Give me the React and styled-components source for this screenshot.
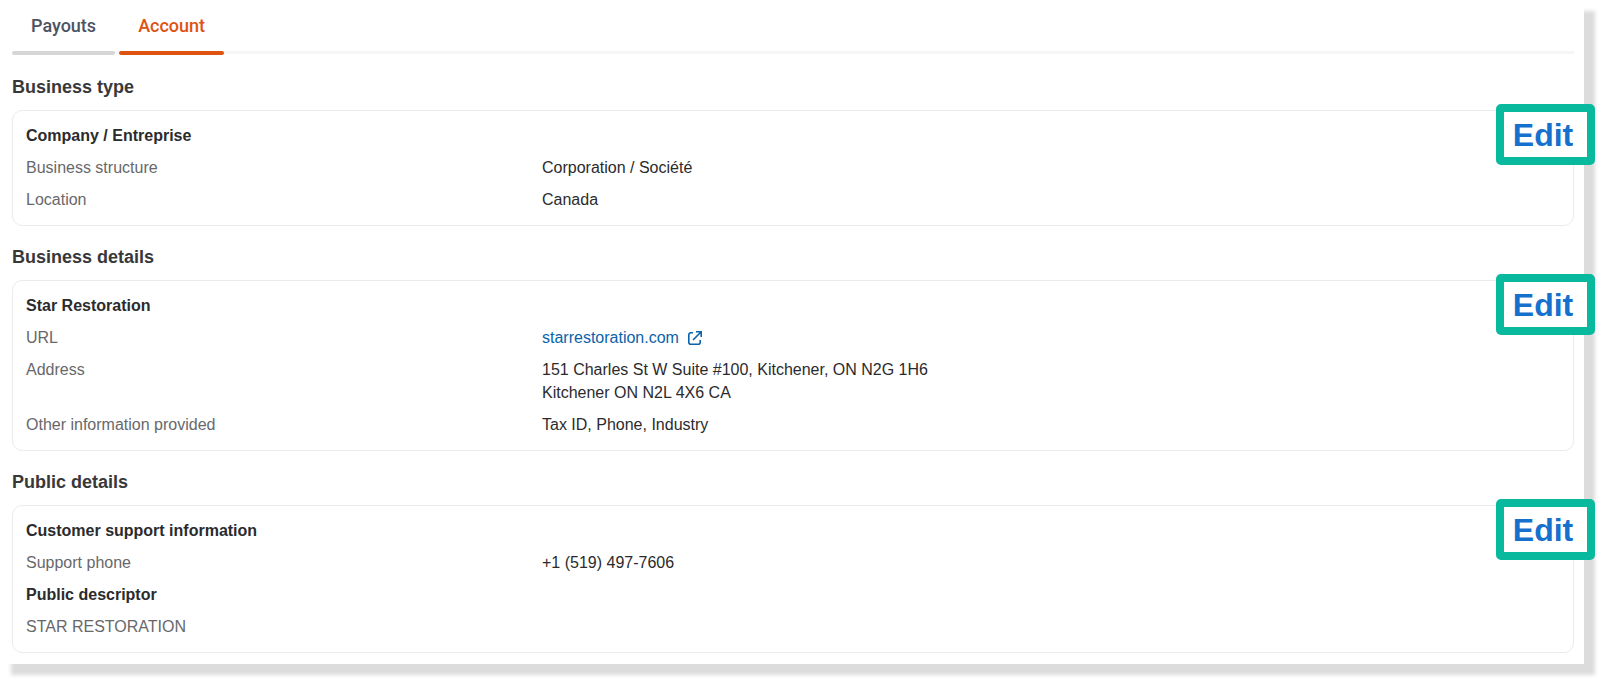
import React from "react";
import styled, { createGlobalStyle } from "styled-components";

const GlobalStyle = createGlobalStyle`
  * { box-sizing: border-box; }
  body {
    margin: 0;
    background: #ffffff;
    color: #2b2b2d;
    font-family: "Liberation Sans", Arial, sans-serif;
    font-size: 16px;
    line-height: 23px;
  }
`;

const Panel = styled.main`
  margin: 0 16px 16px 0;
  padding: 0 10px 11px 12px;
  background: #ffffff;
  box-shadow: 11px 11px 4px #dcdcdc;
`;

const TabList = styled.div`
  position: relative;
  display: flex;
  gap: 4px;
  height: 55px;

  &::before {
    content: "";
    position: absolute;
    left: 0;
    right: 0;
    bottom: 1px;
    height: 3px;
    background: #f6f6f6;
  }
`;

const Tab = styled.button`
  position: relative;
  padding: 0 19px 4px;
  border: 0;
  background: none;
  font: 500 18px/24px Roboto, sans-serif;
  color: ${({ $active }) => ($active ? "#de5212" : "#4c5362")};
  cursor: pointer;

  &::after {
    content: "";
    position: absolute;
    left: 0;
    right: 0;
    bottom: 0;
    height: 4px;
    border-radius: 2px;
    background: ${({ $active }) => ($active ? "#de5212" : "#d6d6d6")};
  }
`;

const Sections = styled.div`
  display: flex;
  flex-direction: column;
  gap: 19px;
  padding-top: 20px;
`;

const SectionTitle = styled.h2`
  margin: 0 0 11px;
  font-size: 18px;
  line-height: 24px;
  font-weight: 700;
  color: #38383a;
`;

const Card = styled.div`
  position: relative;
  display: flex;
  flex-direction: column;
  gap: 9px;
  padding: 13px 13px 14px;
  border: 1px solid #ebebeb;
  border-radius: 10px;
`;

const CardTitle = styled.h3`
  margin: 0;
  font-size: 16px;
  line-height: 23px;
  font-weight: 700;
`;

const Details = styled.dl`
  display: flex;
  flex-direction: column;
  gap: 9px;
  margin: 0;
`;

const Row = styled.div`
  display: grid;
  grid-template-columns: 1fr 2fr;
  gap: 7px;
`;

const Label = styled.dt`
  color: #68686a;
`;

const Value = styled.dd`
  margin: 0;
`;

const Descriptor = styled.p`
  margin: 0;
  color: #68686a;
`;

const SiteLink = styled.a`
  display: inline-flex;
  align-items: center;
  gap: 9px;
  color: #0b62ab;
  text-decoration: none;
`;

const EditButton = styled.button`
  position: absolute;
  top: -7px;
  right: -22px;
  width: 99px;
  height: 61px;
  padding: 0 5px 0 0;
  border: 8px solid #08b99e;
  border-radius: 5px;
  background: #ffffff;
  color: #1670cd;
  font: 700 32px/44px "Liberation Sans", Arial, sans-serif;
  text-align: center;
  cursor: pointer;
`;

function ExternalIcon() {
  return (
    <svg width="14" height="14" viewBox="0 0 14 14" fill="none" stroke="currentColor" strokeWidth="1.6" aria-hidden="true">
      <path d="M5 1.8H2.8a2 2 0 0 0-2 2v7.4a2 2 0 0 0 2 2h7.4a2 2 0 0 0 2-2V9" />
      <path d="M8 0.8h5.2V6M13.2 0.8 5 9" />
    </svg>
  );
}

function Section({ title, children }) {
  return (
    <section>
      <SectionTitle>{title}</SectionTitle>
      <Card>
        {children}
        <EditButton type="button" aria-label={`Edit ${title}`}>Edit</EditButton>
      </Card>
    </section>
  );
}

function Detail({ label, children }) {
  return (
    <Row>
      <Label>{label}</Label>
      <Value>{children}</Value>
    </Row>
  );
}

export default function App() {
  return (
    <>
      <GlobalStyle />
      <Panel>
        <TabList role="tablist">
          <Tab type="button" role="tab" aria-selected="false">Payouts</Tab>
          <Tab type="button" role="tab" aria-selected="true" $active>Account</Tab>
        </TabList>

        <Sections>
          <Section title="Business type">
            <CardTitle>Company / Entreprise</CardTitle>
            <Details>
              <Detail label="Business structure">Corporation / Société</Detail>
              <Detail label="Location">Canada</Detail>
            </Details>
          </Section>

          <Section title="Business details">
            <CardTitle>Star Restoration</CardTitle>
            <Details>
              <Detail label="URL">
                <SiteLink href="https://starrestoration.com">
                  starrestoration.com
                  <ExternalIcon />
                </SiteLink>
              </Detail>
              <Detail label="Address">
                151 Charles St W Suite #100, Kitchener, ON N2G 1H6
                <br />
                Kitchener ON N2L 4X6 CA
              </Detail>
              <Detail label="Other information provided">Tax ID, Phone, Industry</Detail>
            </Details>
          </Section>

          <Section title="Public details">
            <CardTitle>Customer support information</CardTitle>
            <Details>
              <Detail label="Support phone">+1 (519) 497-7606</Detail>
            </Details>
            <CardTitle>Public descriptor</CardTitle>
            <Descriptor>STAR RESTORATION</Descriptor>
          </Section>
        </Sections>
      </Panel>
    </>
  );
}
